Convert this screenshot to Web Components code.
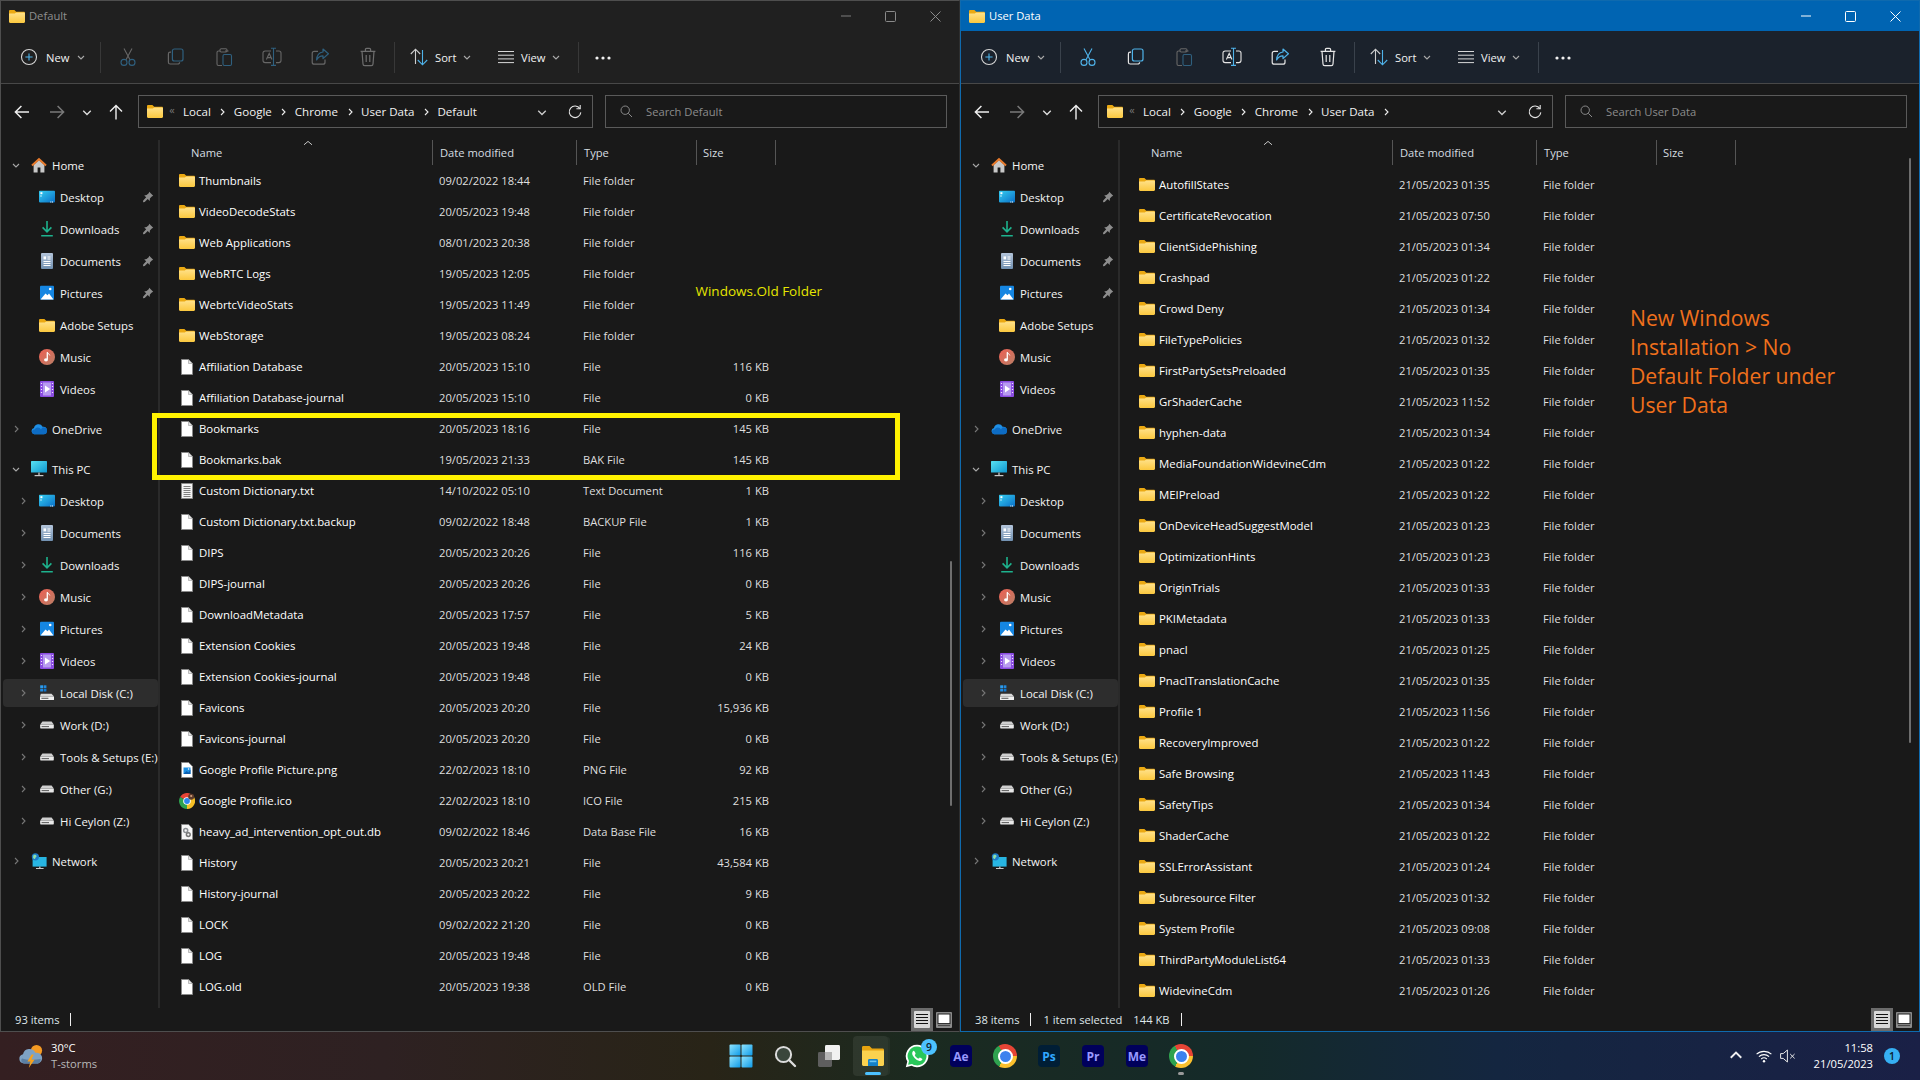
<!DOCTYPE html>
<html lang="en"><head><meta charset="utf-8"><title>Explorer</title>
<style>
html,body{margin:0;padding:0;background:#191919}
body{width:1920px;height:1080px;overflow:hidden;font:11.2px "Open Sans","Noto Sans",sans-serif;color:#fff}
desk-top{display:block}
</style></head><body>
<desk-top></desk-top>
<script>
const chev=(c='#999',d='r',s=8)=>{const p={r:'M3 1l3 3-3 3',d:'M1 3l3 3 3-3',u:'M1 5l3-3 3 3',l:'M5 1L2 4l3 3'}[d];return `<svg width="${s}" height="${s}" viewBox="0 0 8 8"><path d="${p}" fill="none" stroke="${c}" stroke-width="1.1"/></svg>`};
const ICON={
folder:`<svg width="16" height="13" viewBox="0 0 16 13"><defs><linearGradient id="f" x1="0" y1="0" x2="0" y2="1"><stop offset="0" stop-color="#ffe189"/><stop offset="1" stop-color="#fbc83f"/></linearGradient></defs><path d="M0 1.2C0 .5.5 0 1.2 0H5.4L7.2 1.7H14.8C15.5 1.7 16 2.2 16 2.9V5H0Z" fill="#eba912"/><path d="M0 3.6H5.8L7.2 2.6H14.8C15.5 2.6 16 3.1 16 3.8V11.8C16 12.5 15.5 13 14.8 13H1.2C.5 13 0 12.5 0 11.8Z" fill="url(#f)"/></svg>`,
file:`<svg width="16" height="16" viewBox="0 0 16 16"><path d="M2.5.5H9.6L13.5 4.4V15.5H2.5Z" fill="#fff" stroke="#8a8a8a"/><path d="M9.5 .8V4.5H13.2" fill="#e3e3e3" stroke="#a5a5a5" stroke-width=".7"/></svg>`,
txt:`<svg width="16" height="16" viewBox="0 0 16 16"><path d="M2.5.5H13.5V15.5H2.5Z" fill="#f4f4f4" stroke="#8a8a8a"/><path d="M4.5 3.5h7M4.5 5.5h7M4.5 7.5h7M4.5 9.5h7M4.5 11.5h7M4.5 13.5h7" stroke="#808080"/></svg>`,
png:`<svg width="16" height="16" viewBox="0 0 16 16"><path d="M2.5.5H9.6L13.5 4.4V15.5H2.5Z" fill="#fff" stroke="#8a8a8a"/><rect x="4.5" y="5.5" width="7" height="6.5" fill="#1d8fe3"/><path d="M4.5 12l3-3 2 1.5 2-3V12Z" fill="#0c5fb0"/><circle cx="9.6" cy="7" r=".8" fill="#fff"/></svg>`,
db:`<svg width="16" height="16" viewBox="0 0 16 16"><path d="M2.5.5H9.6L13.5 4.4V15.5H2.5Z" fill="#f6f6f6" stroke="#8a8a8a"/><circle cx="6.7" cy="6.6" r="2" fill="none" stroke="#8c8f93" stroke-width="1.5"/><circle cx="9.3" cy="10.6" r="1.9" fill="none" stroke="#777" stroke-width="1.5"/></svg>`,
ico:`<svg width="16" height="16" viewBox="0 0 16 16"><path d="M8 8 1.1 4A8 8 0 0 1 15 4Z" fill="#e64435"/><path d="M8 8 15 4A8 8 0 0 1 8 16Z" fill="#f6bf26"/><path d="M8 8V16A8 8 0 0 1 1.1 4Z" fill="#2fa24f"/><circle cx="8" cy="8" r="3.8" fill="#fff"/><circle cx="8" cy="8" r="2.9" fill="#2e86ec"/><circle cx="12.2" cy="3.8" r="3" fill="#5b3b2b"/><circle cx="12.2" cy="3" r="1.1" fill="#d7a37d"/></svg>`,
home:`<svg width="16" height="16" viewBox="0 0 16 16"><path d="M2.6 8V15.5H6.6V10.5H9.4V15.5H13.4V8L8 3Z" fill="#c8c8c8"/><path d="M8 .7.3 7.8 1.6 9.2 8 3.4 14.4 9.2 15.7 7.8Z" fill="#e87a2b"/></svg>`,
desktop:`<svg width="16" height="16" viewBox="0 0 16 16"><defs><linearGradient id="d" x1="0" y1="0" x2="1" y2="1"><stop offset="0" stop-color="#35cdf0"/><stop offset="1" stop-color="#0a70c8"/></linearGradient></defs><rect y="1.8" width="16" height="11.6" rx=".8" fill="url(#d)"/><rect x="1.4" y="3.2" width="2" height="2" fill="#fff"/><rect x="1.4" y="6.4" width="1.2" height="1.2" fill="#fff"/><rect x="13" y="12.5" width="1" height="1" fill="#fff"/><rect x="11.3" y="12.5" width="1" height="1" fill="#fff"/></svg>`,
downloads:`<svg width="16" height="16" viewBox="0 0 16 16"><path d="M8 0V10.5M3.6 6.4 8 10.8 12.4 6.4M2.2 14.8H13.8" fill="none" stroke="#1db28d" stroke-width="1.6"/></svg>`,
documents:`<svg width="16" height="16" viewBox="0 0 16 16"><defs><linearGradient id="o" x1="0" y1="0" x2="0" y2="1"><stop offset="0" stop-color="#b3c4da"/><stop offset="1" stop-color="#7190b0"/></linearGradient></defs><rect x="2" width="12" height="16" rx="1" fill="url(#o)"/><path d="M8.5 4H11.5M8.5 6H11.5M4.5 8.5H11.5M4.5 10.5H11.5M4.5 12.5H11.5" stroke="#fff"/><rect x="4.5" y="3.4" width="2.6" height="3" fill="#fff"/></svg>`,
pictures:`<svg width="16" height="16" viewBox="0 0 16 16"><rect x="1" y=".8" width="14" height="14" rx="1" fill="#1586e2"/><path d="M1.5 14.5 6.5 8.5 8.5 10.2 10 8.6 14.5 14.5Z" fill="#fff"/><circle cx="11.2" cy="4" r="1.3" fill="#fff"/></svg>`,
music:`<svg width="16" height="16" viewBox="0 0 16 16"><defs><linearGradient id="m" x1="0" y1="0" x2="1" y2="1"><stop offset="0" stop-color="#ee5f53"/><stop offset="1" stop-color="#b97f66"/></linearGradient></defs><circle cx="8" cy="8" r="8" fill="url(#m)"/><path d="M8.3 3.2V10.4" stroke="#fff" stroke-width="1.3"/><path d="M8.3 3.2C9 5 10.5 4.9 10.8 6.4" fill="none" stroke="#fff"/><ellipse cx="7" cy="10.8" rx="2" ry="1.6" fill="#fff"/></svg>`,
videos:`<svg width="16" height="16" viewBox="0 0 16 16"><rect x="1" width="14" height="16" rx="1" fill="#8b4de2"/><rect x="4" y="1.5" width="8" height="13" fill="#b79af0"/><path d="M6 4.6 11.2 8 6 11.4Z" fill="#fff"/><path d="M2.5 2v1M2.5 5v1M2.5 8v1M2.5 11v1M13.5 2v1M13.5 5v1M13.5 8v1M13.5 11v1" stroke="#fff" stroke-width="1.2" opacity=".85"/></svg>`,
onedrive:`<svg width="16" height="16" viewBox="0 0 16 16"><path d="M3.2 13.2A3.1 3.1 0 0 1 3 7.1 4.6 4.6 0 0 1 11.6 5.7 3.7 3.7 0 0 1 12.7 13.2Z" fill="#1f8fe5"/><path d="M3.2 13.2A2.4 2.4 0 0 1 3.6 8.4 3.6 3.6 0 0 1 10 8.4 3 3 0 0 1 15.9 10.7 2.7 2.7 0 0 1 13 13.2Z" fill="#0d6cc4"/></svg>`,
pc:`<svg width="16" height="16" viewBox="0 0 16 16"><defs><linearGradient id="p" x1="0" y1="0" x2="1" y2="1"><stop offset="0" stop-color="#58e2f2"/><stop offset="1" stop-color="#0e96cf"/></linearGradient></defs><rect width="16" height="11.6" rx=".6" fill="url(#p)"/><path d="M7.2 11.6H8.8V14H7.2Z" fill="#a6a6a6"/><rect x="3.6" y="14" width="8.8" height="1.2" fill="#c9c9c9"/></svg>`,
cdrive:`<svg width="16" height="16" viewBox="0 0 16 16"><path d="M1.8 8.8H12.5L15 11.6H1Z" fill="#d8d8d8"/><rect x="1" y="11.4" width="14" height="3.6" rx=".5" fill="#efefef"/><rect x="2.4" y="12.8" width="7" height=".9" fill="#444"/><rect x="1.2" y=".3" width="2.8" height="2.8" fill="#2b9df0"/><rect x="4.6" y=".3" width="2.8" height="2.8" fill="#1f8ae0"/><rect x="1.2" y="3.7" width="2.8" height="2.8" fill="#1f8ae0"/><rect x="4.6" y="3.7" width="2.8" height="2.8" fill="#0f75cc"/></svg>`,
drive:`<svg width="16" height="16" viewBox="0 0 16 16"><path d="M3.4 4.6H12.6L14.8 7.6H1.2Z" fill="#cfcfcf"/><rect x="1.2" y="7.6" width="13.6" height="3.8" rx=".6" fill="#e8e8e8"/><rect x="2.6" y="9.2" width="7.4" height=".9" fill="#4a4a4a"/></svg>`,
network:`<svg width="16" height="16" viewBox="0 0 16 16"><rect x="1.6" y="4" width="14" height="9.6" fill="#27b5e2"/><path d="M8 13.6H9.6V15H8Z" fill="#a6a6a6"/><rect x="5" y="15" width="7.6" height="1" fill="#c9c9c9"/><circle cx="4.4" cy="3.8" r="3.6" fill="#1d7cc8"/><path d="M2.4 2.2C3.6 1.4 5 2 5.4 2.8 6 4 4.6 4 4.2 5.4 3.6 6.6 2.2 5.4 2 4.2Z" fill="#8ee0a8"/></svg>`,
pin:`<svg width="12" height="12" viewBox="0 0 12 12"><path d="M7.2.8 11.2 4.8 9.8 5.4 7.9 7.6 7.7 10 5.7 8 2.7 11 1 11.2 1.2 9.5 4.2 6.3 2.2 4.4 4.6 4.1 6.7 2.2Z" fill="#8d8d8d"/></svg>`,
plus:`<svg width="18" height="18" viewBox="0 0 18 18"><circle cx="9" cy="9" r="7.5" fill="none" stroke="#d6d6d6" stroke-width="1.1"/><path d="M9 5.4V12.6M5.4 9H12.6" stroke="#4fb3ea" stroke-width="1.1"/></svg>`,
cut:c=>`<svg width="20" height="20" viewBox="0 0 20 20"><g fill="none" stroke-width="1.1"><path d="M6 1.5 12 12.8M14 1.5 8 12.8" stroke="${c.a}"/><circle cx="6" cy="15.4" r="3" stroke="${c.b}"/><circle cx="14" cy="15.4" r="3" stroke="${c.b}"/></g></svg>`,
copy:c=>`<svg width="20" height="20" viewBox="0 0 20 20"><g fill="none" stroke-width="1.2"><path d="M5 5.2H4.2C3 5.2 2.4 6 2.4 7V15.2C2.4 16.4 3.2 17 4.2 17H11.6C12.8 17 13.6 16.2 13.6 15.2" stroke="${c.a}"/><rect x="6.4" y="2" width="10.6" height="12" rx="2" stroke="${c.b}"/></g></svg>`,
paste:c=>`<svg width="20" height="20" viewBox="0 0 20 20"><g fill="none" stroke-width="1.1"><path d="M6 4H4.5C3.5 4 3 4.6 3 5.5V17C3 18 3.5 18.5 4.5 18.5H8" stroke="${c.a}"/><path d="M11 4H14.5" stroke="${c.a}"/><rect x="6" y="1.8" width="7" height="3.2" rx="1.2" stroke="${c.a}"/><rect x="9" y="7.5" width="8.5" height="11" rx="1.4" stroke="${c.b}"/></g></svg>`,
rename:c=>`<svg width="20" height="20" viewBox="0 0 20 20"><g fill="none" stroke-width="1.1"><path d="M9 4H3.2C1.8 4 1 4.8 1 6V13.6C1 14.8 1.8 15.6 3.2 15.6H9M14 4H16.8C18.2 4 19 4.8 19 6V13.6C19 14.8 18.2 15.6 16.8 15.6H14" stroke="${c.a}"/><path d="M9 1.2H14M9 18.4H14M11.5 1.2V18.4" stroke="${c.b}"/><path d="M4.4 12.6 7.2 6.4 10 12.6M5.2 10.6H9.2" stroke="${c.a}"/></g></svg>`,
share:c=>`<svg width="20" height="20" viewBox="0 0 20 20"><g fill="none" stroke-width="1.2"><path d="M8 4.4H4.2C3 4.4 2.2 5.2 2.2 6.4V15.2C2.2 16.4 3 17.2 4.2 17.2H13C14.2 17.2 15 16.4 15 15.2V12.6" stroke="${c.a}"/><path d="M13 2 18.4 6.8 13 11.6V8.8C10 8.8 8 10 6.6 13 6.8 8.8 9 5.4 13 5Z" stroke="${c.b}" stroke-linejoin="round"/></g></svg>`,
del:c=>`<svg width="20" height="20" viewBox="0 0 20 20"><g fill="none" stroke="${c.a}" stroke-width="1.2"><path d="M2.6 4.4H17.4M7.4 4.4V2.6C7.4 1.9 7.9 1.4 8.6 1.4H11.4C12.1 1.4 12.6 1.9 12.6 2.6V4.4M4 4.4 5 17C5 18 5.8 18.6 6.8 18.6H13.2C14.2 18.6 15 18 15 17L16 4.4M8.2 8V15M11.8 8V15"/></g></svg>`,
sort:`<svg width="20" height="20" viewBox="0 0 20 20"><g fill="none" stroke-width="1.1"><path d="M6.5 17V2.5M1.8 7 6.5 2.2 11.2 7" stroke="#cfcfcf"/><path d="M13.5 3V17.5M8.8 13 13.5 17.8 18.2 13" stroke="#4fb3ea"/></g></svg>`,
view:`<svg width="16" height="14" viewBox="0 0 16 14"><path d="M0 1.5H16M0 5.2H16M0 8.9H16M0 12.6H16" stroke="#d8d8d8" stroke-width="1"/></svg>`,
dots:`<svg width="16" height="4" viewBox="0 0 16 4"><circle cx="2" cy="2" r="1.6" fill="#f0f0f0"/><circle cx="8" cy="2" r="1.6" fill="#f0f0f0"/><circle cx="14" cy="2" r="1.6" fill="#f0f0f0"/></svg>`,
back:c=>`<svg width="16" height="14" viewBox="0 0 16 14"><path d="M15 7H1.6M7.4 1 1.4 7l6 6" fill="none" stroke="${c}" stroke-width="1.5"/></svg>`,
fwd:c=>`<svg width="16" height="14" viewBox="0 0 16 14"><path d="M1 7H14.4M8.6 1l6 6-6 6" fill="none" stroke="${c}" stroke-width="1.5"/></svg>`,
up:`<svg width="14" height="16" viewBox="0 0 14 16"><path d="M7 15.4V1.6M1 7.4l6-6 6 6" fill="none" stroke="#f0f0f0" stroke-width="1.4"/></svg>`,
refresh:`<svg width="14" height="14" viewBox="0 0 14 14"><path d="M11.9 3.6A5.8 5.8 0 1 0 12.8 7.4" fill="none" stroke="#e4e4e4" stroke-width="1.1"/><path d="M8.4 3.8H12.2V0" fill="none" stroke="#e4e4e4" stroke-width="1.1"/></svg>`,
search:`<svg width="13" height="13" viewBox="0 0 13 13"><circle cx="5.2" cy="5.2" r="4.2" fill="none" stroke="#8a8a8a" stroke-width="1"/><path d="M8.3 8.3 12 12" stroke="#8a8a8a" stroke-width="1"/></svg>`,
min:c=>`<svg width="12" height="2" viewBox="0 0 12 2"><path d="M1 1H11" stroke="${c}" stroke-width="1"/></svg>`,
max:c=>`<svg width="11" height="11" viewBox="0 0 11 11"><rect x=".5" y=".5" width="10" height="10" rx="1" fill="none" stroke="${c}"/></svg>`,
close:c=>`<svg width="11" height="11" viewBox="0 0 11 11"><path d="M.5.5 10.5 10.5M10.5.5.5 10.5" stroke="${c}"/></svg>`,
winlogo:`<svg width="24" height="24" viewBox="0 0 24 24"><defs><linearGradient id="w" x1="0" y1="0" x2="1" y2="1"><stop offset="0" stop-color="#8fe4ff"/><stop offset="1" stop-color="#0f9be8"/></linearGradient></defs><rect x=".5" y=".5" width="11" height="11" rx="1" fill="url(#w)"/><rect x="12.5" y=".5" width="11" height="11" rx="1" fill="url(#w)"/><rect x=".5" y="12.5" width="11" height="11" rx="1" fill="url(#w)"/><rect x="12.5" y="12.5" width="11" height="11" rx="1" fill="url(#w)"/></svg>`,
tsearch:`<svg width="24" height="24" viewBox="0 0 24 24"><circle cx="10.5" cy="10.5" r="7.6" fill="#3a463c" stroke="#dcdcdc" stroke-width="2"/><path d="M16 16 22 22" stroke="#dcdcdc" stroke-width="2.4" stroke-linecap="round"/></svg>`,
taskview:`<svg width="24" height="24" viewBox="0 0 24 24"><rect x="1" y="8" width="14" height="15" rx="1.4" fill="#5e5e5e"/><rect x="8" y="1" width="15" height="15" rx="1.4" fill="#f1f1f1"/><rect x="8" y="8" width="7" height="8" fill="#b5b5b5"/></svg>`,
explorer:`<svg width="24" height="24" viewBox="0 0 24 24"><path d="M1 3.4C1 2.6 1.6 2 2.4 2H8.5L11 4.5H21.6C22.4 4.5 23 5.1 23 5.9V9H1Z" fill="#e6a310"/><path d="M1 6.5H23V20.6C23 21.4 22.4 22 21.6 22H2.4C1.6 22 1 21.4 1 20.6Z" fill="#fbd24f"/><path d="M7 16.4C7 15.6 7.6 15 8.4 15H15.6C16.4 15 17 15.6 17 16.4V22H7Z" fill="#1481c8"/><rect x="8.6" y="16.6" width="6.8" height="1.6" fill="#6cc6f2"/></svg>`,
whatsapp:`<svg width="24" height="24" viewBox="0 0 24 24"><path d="M12 .8A11.2 11.2 0 0 0 2.3 17.6L.8 23.2 6.6 21.7A11.2 11.2 0 1 0 12 .8Z" fill="#fff"/><path d="M12 2.6A9.4 9.4 0 0 0 4 16.9L3.1 20.8 7 19.9A9.4 9.4 0 1 0 12 2.6Z" fill="#29c75a"/><path d="M8.8 6.8C8 7 7 8.2 7.2 9.8 7.4 12 10.8 16.4 14.6 17 16.2 17.2 17.4 16 17.4 15 17.4 14.6 15.2 13.4 14.8 13.4 14.4 13.6 14 14.6 13.4 14.6 12.4 14.4 10 12.2 9.8 11.2 9.8 10.6 10.6 10.2 10.6 9.8 10.6 9.4 9.4 6.8 8.8 6.8Z" fill="#fff"/></svg>`,
weather:`<svg width="26" height="26" viewBox="0 0 26 26"><circle cx="18.5" cy="7.5" r="5.6" fill="#f59a23"/><path d="M6 20.4A4.6 4.6 0 0 1 5 11.3 6.6 6.6 0 0 1 17.4 9.8 5.3 5.3 0 0 1 20 20.4Z" fill="#7ea2c4"/><path d="M6 20.4A3 3 0 0 1 4 15.4C8 17 16 17 22.8 16 22.4 18.6 21.4 20.4 20 20.4Z" fill="#5b7fa3"/><path d="M13.6 11.4 9.4 18.6H12.4L10.8 25 16.6 16.6H13.4L15.8 11.4Z" fill="#f6a11f"/></svg>`,
wifi:`<svg width="16" height="16" viewBox="0 0 16 16"><g fill="none" stroke="#fff" stroke-width="1.1"><path d="M.6 6.2C4.6 2.4 11.4 2.4 15.4 6.2"/><path d="M2.9 8.6C5.8 6 10.2 6 13.1 8.6"/><path d="M5.2 11C6.8 9.6 9.2 9.6 10.8 11"/></g><circle cx="8" cy="13.2" r="1.2" fill="#fff"/></svg>`,
mute:`<svg width="16" height="16" viewBox="0 0 16 16"><path d="M.6 5.6H3.2L7.4 2V14L3.2 10.4H.6Z" fill="none" stroke="#e8e8e8" stroke-width="1"/><path d="M10.2 6 14.6 10.4M14.6 6 10.2 10.4" stroke="#e8e8e8" stroke-width="1"/></svg>`,
caret:`<svg width="16" height="16" viewBox="0 0 16 16"><path d="M4 9.8 8 6.4 12 9.8" fill="none" stroke="#c4c4c4" stroke-width="1"/></svg>`,
toggleA:`<svg width="22" height="23" viewBox="0 0 22 23"><rect width="22" height="23" fill="#6b6b6b"/><rect x="3" y="3" width="16" height="17" rx="1" fill="#d8d8d8"/><path d="M5 6.5H17M5 9.5H17M5 12.5H17M5 15.5H17" stroke="#111"/></svg>`,
toggleB:`<svg width="16" height="16" viewBox="0 0 16 16"><rect width="16" height="16" rx="1" fill="#8b8b8b"/><rect x="2" y="2" width="12" height="9.6" fill="#fff" stroke="#222"/><path d="M2 13.6H14" stroke="#444"/></svg>`
};
const PAL={dim:{a:'#676767',b:'#2f607f'},dimg:{a:'#6e6e6e',b:'#6e6e6e'},on:{a:'#e6e6e6',b:'#4fb3ea'},onb:{a:'#4fb3ea',b:'#4fb3ea'}};

class XIcon extends HTMLElement{connectedCallback(){if(this.shadowRoot)return;const s=this.attachShadow({mode:'open'});const v=ICON[this.getAttribute('n')];const a=this.getAttribute('a');s.innerHTML=`<style>:host{display:inline-flex;align-items:center;justify-content:center;flex:none;line-height:0}</style>${typeof v==='function'?v(PAL[a]||a):v}`}}

class FeTitle extends HTMLElement{connectedCallback(){if(this.shadowRoot)return;const s=this.attachShadow({mode:'open'});const act=this.hasAttribute('active');const c=act?'#fff':'#7c7c7c';
s.innerHTML=`<style>:host{display:flex;align-items:center;height:30px;flex:none;background:${act?'#0064b2':'#202020'};color:${act?'#fff':'#8f8f8f'};padding-left:8px}
.t{margin-left:4px;flex:1;padding-bottom:2px}.b{width:45px;display:flex;justify-content:center}
.w{display:flex;margin-right:1px}</style>
<x-icon n="folder"></x-icon><span class="t"><slot></slot></span><div class="w"><div class="b"><x-icon n="min" a="${c}"></x-icon></div><div class="b"><x-icon n="max" a="${act?'#fff':'#8a8a8a'}"></x-icon></div><div class="b"><x-icon n="close" a="${act?'#fff':'#8a8a8a'}"></x-icon></div></div>`}}

class FeToolbar extends HTMLElement{connectedCallback(){if(this.shadowRoot)return;const s=this.attachShadow({mode:'open'});const act=this.hasAttribute('active');
const st=(k,n)=>`<div class="i"><x-icon n="${k}" a="${n}"></x-icon></div>`;
s.innerHTML=`<style>:host{display:flex;align-items:center;height:52px;flex:none;background:${act?'#1b222c':'#202020'};border-bottom:1px solid #484848;color:#f2f2f2}
.sep{width:1px;height:31px;background:${act?'#3a424c':'#383838'};flex:none}
.new{width:99px;display:flex;align-items:center;padding-left:19px;box-sizing:border-box}.new span{margin-left:8px}.new .c{margin-left:8px}
.i{width:48px;display:flex;justify-content:center;flex:none}
.g{display:flex;margin:0 2px 0 3px}
.seg{display:flex;align-items:center;flex:none}
.sort{width:103px;padding-left:14px;box-sizing:border-box}.view{width:80px}
.sort span{margin-left:6px}.view span{margin-left:7px}.seg span.c,.c{display:inline-flex;margin-left:7px}
.txt{padding-top:1px}
.dots{width:48px;display:flex;justify-content:center;padding-top:2px}</style>
<div class="new"><x-icon n="plus"></x-icon><span class="txt">New</span><span class="c">${chev('#aaa','d',8)}</span></div><div class="sep"></div>
<div class="g">${st('cut',act?'onb':'dim')}${st('copy',act?'on':'dim')}${st('paste','dim')}${st('rename',act?'on':'dim')}${st('share',act?'on':'dim')}${st('del',act?'on':'dimg')}</div><div class="sep"></div>
<div class="seg sort"><x-icon n="sort"></x-icon><span class="txt">Sort</span><span class="c">${chev('#aaa','d',8)}</span></div>
<div class="seg view"><x-icon n="view"></x-icon><span class="txt">View</span><span class="c">${chev('#aaa','d',8)}</span></div><div class="sep"></div>
<div class="dots"><x-icon n="dots"></x-icon></div>`}}

class FeNav extends HTMLElement{connectedCallback(){if(this.shadowRoot)return;const s=this.attachShadow({mode:'open'});
const crumbs=this.getAttribute('crumbs').split('|');const tail=this.hasAttribute('tail');
s.innerHTML=`<style>:host{display:flex;height:33px;padding:11px 0 12px;flex:none;background:#191919;color:#f2f2f2}
.n{display:flex;align-items:center;justify-content:center;flex:none}
.box{border:1px solid #5a5a5a;height:31px;display:flex;align-items:center;flex:none}
.addr{margin-left:8px;padding-left:8px;box-sizing:content-box;width:445px;font-size:11.55px}
.ll{color:#777;margin:0 7px 0 5px;font-size:11px;padding-bottom:4px;width:8px;text-align:center}
.sp{width:23px;display:flex;justify-content:center;flex:none}
.end{margin-left:auto;display:flex;margin-right:1px}.end div{width:33px;display:flex;justify-content:center;align-items:center}
.srch{margin-left:12px;width:340px;color:#8c8c8c}.srch x-icon{margin:0 13px 0 14px}</style>
<div class="n" style="width:41px"><x-icon n="back" a="#eee"></x-icon></div><div class="n" style="width:30px"><x-icon n="fwd" a="#7a7a7a"></x-icon></div><div class="n" style="width:30px">${chev('#ddd','d',10)}</div><div class="n" style="width:28px"><x-icon n="up"></x-icon></div>
<div class="box addr"><x-icon n="folder"></x-icon><span class="ll">«</span>${crumbs.map((c,i)=>`<span>${c}</span>${i<crumbs.length-1||tail?`<span class="sp">${chev('#eee','r',8)}</span>`:''}`).join('')}<div class="end"><div>${chev('#ccc','d',10)}</div><div><x-icon n="refresh"></x-icon></div></div></div>
<div class="box srch"><x-icon n="search"></x-icon><slot></slot></div>`}}

class SideItem extends HTMLElement{connectedCallback(){if(this.shadowRoot)return;const s=this.attachShadow({mode:'open'});
const lv=+this.getAttribute('lv')||1;const ex=this.getAttribute('ex');const pin=this.hasAttribute('pin');const sel=this.hasAttribute('sel');
s.innerHTML=`<style>:host{display:flex;align-items:center;height:32px;position:relative;white-space:nowrap;color:#f4f4f4;font-size:11.4px}
.sel{position:absolute;left:2px;right:0;top:2px;bottom:2px;background:#2d2d2d;border-radius:4px}
.c{position:relative;width:8px;display:flex;justify-content:center;margin-left:${lv==1?11:18}px}
x-icon.ic{position:relative;margin-left:${lv==1?11:12}px}.t{position:relative;margin-left:5px}
.p{position:absolute;left:141px;top:10px}</style>
${sel?'<div class="sel"></div>':''}<span class="c">${ex?chev(ex=='d'?'#a8a8a8':'#777',ex,8):''}</span><x-icon class="ic" n="${this.getAttribute('i')}"></x-icon><span class="t"><slot></slot></span>${pin?'<x-icon class="p" n="pin"></x-icon>':''}`}}

class FeSidebar extends HTMLElement{connectedCallback(){if(this.shadowRoot)return;const s=this.attachShadow({mode:'open'});
s.innerHTML=`<style>:host{display:block;width:157px;flex:none;padding-top:9px;overflow:hidden;box-sizing:border-box}</style><slot></slot>`;
const add=(l,i,o={})=>{const e=document.createElement('side-item');e.setAttribute('i',i);e.setAttribute('lv',o.lv||2);if(o.ex)e.setAttribute('ex',o.ex);if(o.pin)e.setAttribute('pin','');if(o.sel)e.setAttribute('sel','');e.textContent=l;this.append(e)};
const gap=()=>{const d=document.createElement('div');d.style.height='8px';this.append(d)};
add('Home','home',{lv:1,ex:'d'});
add('Desktop','desktop',{pin:1});add('Downloads','downloads',{pin:1});add('Documents','documents',{pin:1});add('Pictures','pictures',{pin:1});add('Adobe Setups','folder');add('Music','music');add('Videos','videos');gap();
add('OneDrive','onedrive',{lv:1,ex:'r'});gap();
add('This PC','pc',{lv:1,ex:'d'});
add('Desktop','desktop',{ex:'r'});add('Documents','documents',{ex:'r'});add('Downloads','downloads',{ex:'r'});add('Music','music',{ex:'r'});add('Pictures','pictures',{ex:'r'});add('Videos','videos',{ex:'r'});
add('Local Disk (C:)','cdrive',{ex:'r',sel:1});add('Work (D:)','drive',{ex:'r'});add('Tools & Setups (E:)','drive',{ex:'r'});add('Other (G:)','drive',{ex:'r'});add('Hi Ceylon (Z:)','drive',{ex:'r'});gap();
add('Network','network',{lv:1,ex:'r'});
}}

const COLS='272px 144px 120px 80px';
class FeHeader extends HTMLElement{connectedCallback(){if(this.shadowRoot)return;const s=this.attachShadow({mode:'open'});
s.innerHTML=`<style>:host{display:grid;grid-template-columns:${COLS};height:25px;flex:none;color:#d6dde0;position:relative;justify-content:start}
div{display:flex;align-items:center;padding-left:7px;border-left:1px solid #555;box-sizing:border-box}
div:first-of-type{border-left:0;padding-left:31px}div:last-of-type{border-right:1px solid #555;padding-left:6px}
x-icon{position:absolute;left:140px;top:-5px}</style>
<div>Name</div><div>Date modified</div><div>Type</div><div>Size</div><x-icon n="caret"></x-icon>`}}

class FeRow extends HTMLElement{connectedCallback(){if(this.shadowRoot)return;const s=this.attachShadow({mode:'open'});const g=k=>this.getAttribute(k)||'';
s.innerHTML=`<style>:host{display:grid;grid-template-columns:${COLS};height:31px;align-items:center;white-space:nowrap;justify-content:start;color:#dfdfdf}
.n{display:flex;align-items:center;padding-left:19px;color:#fff;font-size:11.4px}.n span{margin-left:4px}
.d,.ty{padding-left:7px}.sz{text-align:right;padding-right:7px}</style>
<div class="n"><x-icon n="${g('i')}"></x-icon><span><slot></slot></span></div><div class="d">${g('d')}</div><div class="ty">${g('t')}</div><div class="sz">${g('s')}</div>`}}

class FeList extends HTMLElement{connectedCallback(){if(this.shadowRoot)return;const s=this.attachShadow({mode:'open'});
s.innerHTML=`<style>:host{display:block;flex:1;min-height:0;overflow:hidden;padding-top:${this.getAttribute('top')||0}px;position:relative}</style><slot></slot>`}}

class FeScroll extends HTMLElement{connectedCallback(){if(this.shadowRoot)return;const s=this.attachShadow({mode:'open'});
s.innerHTML=`<style>:host{position:absolute;left:${this.getAttribute('x')}px;top:${this.getAttribute('y')}px;height:${this.getAttribute('h')}px;width:2px;background:#6e6e6e;border-radius:1px}</style>`}}

class FeStatus extends HTMLElement{connectedCallback(){if(this.shadowRoot)return;const s=this.attachShadow({mode:'open'});const sel=this.hasAttribute('sel');
s.innerHTML=`<style>:host{display:flex;align-items:center;height:23px;flex:none;background:#191919;color:#dfe6ea;padding-left:14px}
.bar{width:1px;height:13px;background:#eee;margin:0 12px 0 11px}
.x{margin-left:auto;display:flex;align-items:center}.x x-icon+x-icon{margin:0 7px 0 3px}
.s{margin-left:11px}</style>
<span>${this.getAttribute('count')}</span><span class="bar"></span>${sel?`<span>1 item selected</span><span class="s">144 KB</span><span class="bar"></span>`:''}
<div class="x"><x-icon n="toggleA"></x-icon><x-icon n="toggleB"></x-icon></div>`}}

const F='File folder';
const LEFT=[['Thumbnails','folder','09/02/2022 18:44',F],['VideoDecodeStats','folder','20/05/2023 19:48',F],['Web Applications','folder','08/01/2023 20:38',F],['WebRTC Logs','folder','19/05/2023 12:05',F],['WebrtcVideoStats','folder','19/05/2023 11:49',F],['WebStorage','folder','19/05/2023 08:24',F],
['Affiliation Database','file','20/05/2023 15:10','File','116 KB'],['Affiliation Database-journal','file','20/05/2023 15:10','File','0 KB'],['Bookmarks','file','20/05/2023 18:16','File','145 KB'],['Bookmarks.bak','file','19/05/2023 21:33','BAK File','145 KB'],['Custom Dictionary.txt','txt','14/10/2022 05:10','Text Document','1 KB'],['Custom Dictionary.txt.backup','file','09/02/2022 18:48','BACKUP File','1 KB'],['DIPS','file','20/05/2023 20:26','File','116 KB'],['DIPS-journal','file','20/05/2023 20:26','File','0 KB'],['DownloadMetadata','file','20/05/2023 17:57','File','5 KB'],['Extension Cookies','file','20/05/2023 19:48','File','24 KB'],['Extension Cookies-journal','file','20/05/2023 19:48','File','0 KB'],['Favicons','file','20/05/2023 20:20','File','15,936 KB'],['Favicons-journal','file','20/05/2023 20:20','File','0 KB'],['Google Profile Picture.png','png','22/02/2023 18:10','PNG File','92 KB'],['Google Profile.ico','ico','22/02/2023 18:10','ICO File','215 KB'],['heavy_ad_intervention_opt_out.db','db','09/02/2022 18:46','Data Base File','16 KB'],['History','file','20/05/2023 20:21','File','43,584 KB'],['History-journal','file','20/05/2023 20:22','File','9 KB'],['LOCK','file','09/02/2022 21:20','File','0 KB'],['LOG','file','20/05/2023 19:48','File','0 KB'],['LOG.old','file','20/05/2023 19:38','OLD File','0 KB']];
const RIGHT=[['AutofillStates','01:35'],['CertificateRevocation','07:50'],['ClientSidePhishing','01:34'],['Crashpad','01:22'],['Crowd Deny','01:34'],['FileTypePolicies','01:32'],['FirstPartySetsPreloaded','01:35'],['GrShaderCache','11:52'],['hyphen-data','01:34'],['MediaFoundationWidevineCdm','01:22'],['MEIPreload','01:22'],['OnDeviceHeadSuggestModel','01:23'],['OptimizationHints','01:23'],['OriginTrials','01:33'],['PKIMetadata','01:33'],['pnacl','01:25'],['PnaclTranslationCache','01:35'],['Profile 1','11:56'],['RecoveryImproved','01:22'],['Safe Browsing','11:43'],['SafetyTips','01:34'],['ShaderCache','01:22'],['SSLErrorAssistant','01:24'],['Subresource Filter','01:32'],['System Profile','09:08'],['ThirdPartyModuleList64','01:33'],['WidevineCdm','01:26']].map(r=>[r[0],'folder','21/05/2023 '+r[1],F]);
const W={a:LEFT,b:RIGHT};

class FeWindow extends HTMLElement{connectedCallback(){if(this.shadowRoot)return;const s=this.attachShadow({mode:'open'});const act=this.hasAttribute('active');const A=act?'active':'';
s.innerHTML=`<style>:host{display:flex;flex-direction:column;width:960px;height:1032px;box-sizing:border-box;background:#191919;border:1px solid ${act?'#0f6aae':'#4e4e4e'};position:relative;${act?'':'border-right-color:#2e2e2e;'}overflow:hidden}
.body{flex:1;display:flex;min-height:0}.div{width:2px;background:#2a2a2a;flex:none}
.main{flex:1;display:flex;flex-direction:column;min-width:0}</style>
<fe-title ${A}>${this.getAttribute('name')}</fe-title><fe-toolbar ${A}></fe-toolbar>
<fe-nav crumbs="${this.getAttribute('crumbs')}" ${this.hasAttribute('tail')?'tail':''}>Search ${this.getAttribute('name')}</fe-nav>
<div class="body"><fe-sidebar></fe-sidebar><div class="div"></div><div class="main"><fe-header></fe-header><fe-list top="${act?4:0}" id="l"></fe-list></div></div>
<fe-status count="${this.getAttribute('count')}" ${act?'sel':''}></fe-status>
<fe-scroll x="${this.getAttribute('sx')}" y="${this.getAttribute('sy')}" h="${this.getAttribute('sh')}"></fe-scroll>`;
const l=s.getElementById('l');
W[this.id].forEach(r=>{const e=document.createElement('fe-row');e.setAttribute('i',r[1]);e.setAttribute('d',r[2]);e.setAttribute('t',r[3]);e.setAttribute('s',r[4]||'');e.textContent=r[0];l.append(e)});
}}

class TaskItem extends HTMLElement{connectedCallback(){if(this.shadowRoot)return;const s=this.attachShadow({mode:'open'});
const g=k=>this.getAttribute(k);
s.innerHTML=`<style>:host{display:flex;width:44px;height:48px;align-items:center;justify-content:center;position:relative;flex:none}
.hl{position:absolute;left:2px;width:35px;top:4px;height:40px;border-radius:4px;background:rgba(255,255,255,.07);box-shadow:3px 0 0 -1px rgba(255,255,255,.045)}
.u{position:absolute;bottom:5px;height:3px;border-radius:2px;left:50%;transform:translateX(-50%)}
.u.a{width:16px;background:#4cc2ff}.u.b{width:6px;background:#9a9a9a}
.bd{position:absolute;left:26px;top:7px;width:16px;height:16px;border-radius:50%;background:#4cc2ff;color:#10222c;display:flex;align-items:center;justify-content:center;font-size:10.5px;font-weight:600}
.app{width:22px;height:22px;border-radius:4px;display:flex;align-items:center;justify-content:center;font-weight:700;font-size:12px;background:${g('bg')||'none'};color:${g('fg')||'#fff'}}
.ch{width:24px;height:24px;border-radius:50%;background:conic-gradient(from -32deg,#e64435 0 124deg,#fbc02d 0 242deg,#2fa24f 0);display:flex;align-items:center;justify-content:center}
.ch i{display:block;width:11px;height:11px;border-radius:50%;background:#3b82ee;border:2.4px solid #fff}</style>
${g('hl')?'<div class="hl"></div>':''}${g('app')?`<div class="app">${g('app')}</div>`:g('chrome')?'<div class="ch"><i></i></div>':`<x-icon style="position:relative" n="${g('i')}"></x-icon>`}${g('bd')?`<div class="bd">${g('bd')}</div>`:''}${g('u')?`<div class="u ${g('u')}"></div>`:''}`}}

class TaskBar extends HTMLElement{connectedCallback(){if(this.shadowRoot)return;const s=this.attachShadow({mode:'open'});
s.innerHTML=`<style>:host{display:grid;grid-template-columns:1fr auto 1fr;height:48px;align-items:center;background:linear-gradient(90deg,#341f21 0%,#2e2122 20%,#282417 37%,#1b2a20 48%,#142a2a 65%,#142640 78%,#1a2046 100%);color:#fff}
.w{display:flex;align-items:center;padding-left:18px}.w div{margin-left:7px;line-height:16px}.w small{font-size:inherit;color:#b9b9b9;display:block}
.c{display:flex;margin-left:2px}
.r{display:flex;align-items:center;justify-content:flex-end;padding-right:20px}
.r>*{flex:none}.clk{text-align:right;line-height:16px;margin-left:18px;margin-right:11px}
.bd1{width:16px;height:16px;border-radius:50%;background:#36b0f4;color:#0d2333;display:flex;align-items:center;justify-content:center;font-size:10.5px;font-weight:600}</style>
<div class="w"><x-icon n="weather"></x-icon><div>30°C<small>T-storms</small></div></div>
<div class="c"><task-item i="winlogo"></task-item><task-item i="tsearch"></task-item><task-item i="taskview"></task-item><task-item i="explorer" hl="1" u="a"></task-item><task-item i="whatsapp" bd="9"></task-item><task-item app="Ae" bg="#00005b" fg="#9999ff"></task-item><task-item chrome="1"></task-item><task-item app="Ps" bg="#001e36" fg="#31a8ff"></task-item><task-item app="Pr" bg="#00005b" fg="#9999ff"></task-item><task-item app="Me" bg="#00005b" fg="#9999ff"></task-item><task-item chrome="1" u="b"></task-item></div>
<div class="r"><span style="margin-right:13px;display:flex">${chev('#f0f0f0','u',14)}</span><x-icon n="wifi" style="margin-right:8px"></x-icon><x-icon n="mute"></x-icon><div class="clk">11:58<br>21/05/2023</div><div class="bd1">1</div></div>`}}

class NoteBox extends HTMLElement{connectedCallback(){if(this.shadowRoot)return;const s=this.attachShadow({mode:'open'});
s.innerHTML=`<style>:host{position:absolute;left:152px;top:413px;width:738px;height:57px;border:5px solid #fff200}</style>`}}
class NoteText extends HTMLElement{connectedCallback(){if(this.shadowRoot)return;const s=this.attachShadow({mode:'open'});const g=k=>this.getAttribute(k);
s.innerHTML=`<style>:host{position:absolute;left:${g('x')}px;top:${g('y')}px;color:${g('c')};font-size:${g('f')}px;line-height:${g('l')}px;white-space:pre}</style><slot></slot>`}}

class DeskTop extends HTMLElement{connectedCallback(){if(this.shadowRoot)return;const s=this.attachShadow({mode:'open'});
s.innerHTML=`<style>:host{display:block;position:relative;width:1920px;height:1080px;overflow:hidden}.ws{display:flex}</style>
<div class="ws"><fe-window id="a" name="Default" crumbs="Local|Google|Chrome|User Data|Default" count="93 items" sx="949" sy="560" sh="245"></fe-window><fe-window id="b" active name="User Data" tail crumbs="Local|Google|Chrome|User Data" count="38 items" sx="948" sy="157" sh="585"></fe-window></div>
<task-bar></task-bar>
<note-box></note-box>
<note-text x="695.5" y="281" c="#e6e600" f="13.5" l="20">Windows.Old Folder</note-text>
<note-text x="1630" y="302.5" c="#f0701c" f="21.2" l="29.3">New Windows
Installation &gt; No
Default Folder under
User Data</note-text>`;
}}
[['x-icon',XIcon],['fe-title',FeTitle],['fe-toolbar',FeToolbar],['fe-nav',FeNav],['side-item',SideItem],['fe-sidebar',FeSidebar],['fe-header',FeHeader],['fe-row',FeRow],['fe-list',FeList],['fe-scroll',FeScroll],['fe-status',FeStatus],['fe-window',FeWindow],['task-item',TaskItem],['task-bar',TaskBar],['note-box',NoteBox],['note-text',NoteText],['desk-top',DeskTop]].forEach(([n,c])=>customElements.define(n,c));
</script>
</body></html>
